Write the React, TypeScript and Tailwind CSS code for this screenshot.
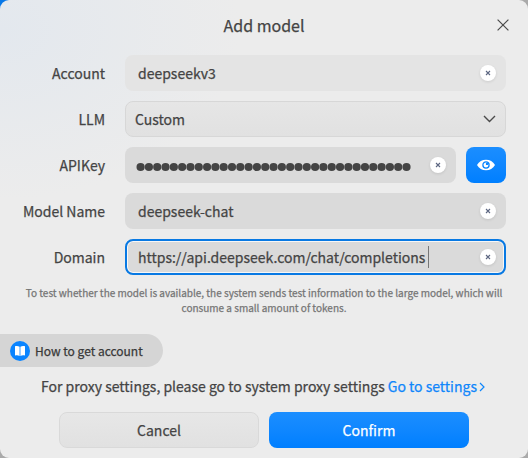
import type { ReactNode } from "react";

function ClearButton() {
  return (
    <button
      aria-label="Clear"
      className="flex size-4 shrink-0 items-center justify-center rounded-full bg-white shadow-[0_1px_3px_rgba(0,0,0,0.1)]"
    >
      <svg width="6" height="6" viewBox="0 0 6 6" fill="none" stroke="#5d6782" strokeWidth="1.1">
        <path d="M1 1l4 4M5 1L1 5" />
      </svg>
    </button>
  );
}

function Row({ label, children }: { label: string; children: ReactNode }) {
  return (
    <div className="flex h-9 items-center">
      <div className="w-[105px] shrink-0 text-right">{label}</div>
      <div className="ml-5 flex h-9 w-[381px] gap-2.5">{children}</div>
    </div>
  );
}

export default function App() {
  return (
    <div className="h-[458px] w-[528px] overflow-hidden bg-[linear-gradient(135deg,#0878e8_0,#0878e8_20px,#aaa_30px,#aaa_100%)]">
      <div className="flex h-full w-full flex-col overflow-hidden rounded-[9px] bg-[#ececec] bg-[radial-gradient(ellipse_240px_170px_at_0px_30px,#e3e8ee,#ececec)] font-['Noto_Sans_CJK_SC',sans-serif] text-[14px] leading-5 font-normal whitespace-nowrap text-[#444] [-webkit-text-stroke:0.25px_currentColor]">
        <header className="flex h-[55px] shrink-0 items-start">
          <h1 className="ml-[64px] flex-1 pt-[15px] text-center text-[16px] leading-5">Add model</h1>
          <button aria-label="Close" className="mt-[19px] mr-[19px] ml-[33px] size-3">
            <svg width="12" height="12" viewBox="0 0 12 12" fill="none" stroke="#4a4a4a" strokeWidth="1.2">
              <path d="M.6.6l10.8 10.8M11.4.6L.6 11.4" />
            </svg>
          </button>
        </header>
        <div className="flex flex-col gap-2.5">
          <Row label="Account">
            <div className="flex flex-1 items-center justify-between rounded-lg bg-[#e4e4e4] pr-[10px] pl-[13px]">
              <span>deepseekv3</span>
              <ClearButton />
            </div>
          </Row>
          <Row label="LLM">
            <div className="flex flex-1 items-center justify-between rounded-lg border border-[#d7d7d7] bg-linear-to-b from-[#e6e6e6] to-[#e1e1e1] pr-[9px] pl-[9px]">
              <span>Custom</span>
              <svg width="13" height="8" viewBox="0 0 13 8" fill="none" stroke="#4a4a4a" strokeWidth="1.4">
                <path d="M1 1l5.5 5.5L12 1" />
              </svg>
            </div>
          </Row>
          <Row label="APIKey">
            <div className="flex flex-1 items-center justify-between rounded-lg bg-[#dadada] pr-[10px] pl-[11px]">
              <svg width="276" height="10" viewBox="0 0 276 10" className="mt-1" fill="#444">
                {Array.from({ length: 33 }, (_, i) => (
                  <circle key={i} cx={4.6 + i * 8.31} cy="5" r="4.1" />
                ))}
              </svg>
              <ClearButton />
            </div>
            <button
              aria-label="Show key"
              className="flex w-10 items-center justify-center rounded-lg bg-linear-to-b from-[#1b8eff] to-[#007fff]"
            >
              <svg width="18" height="12" viewBox="0 0 18 12">
                <path d="M0 6C2 2.500 5.200.8 9 .8S16 2.500 18 6c-2 3.500-5.200 5.200-9 5.200S2 9.500 0 6z" fill="#fff" />
                <circle cx="9" cy="6" r="3.100" fill="none" stroke="#0a86ff" strokeWidth="1.300" />
                <circle cx="10" cy="4.900" r="1.200" fill="#0a86ff" />
              </svg>
            </button>
          </Row>
          <Row label="Model Name">
            <div className="flex flex-1 items-center justify-between rounded-lg bg-[#dadada] pr-[10px] pl-[13px]">
              <span>deepseek-chat</span>
              <ClearButton />
            </div>
          </Row>
          <Row label="Domain">
            <div className="flex flex-1 items-center justify-between rounded-lg border-2 border-[#0879e3] bg-[#dadada] pr-[8px] pl-[11px] shadow-[inset_0_0_0_1px_#f7f7f7]">
              <span className="flex items-center">
                https://api.deepseek.com/chat/completions
                <span className="ml-[3px] h-[22px] w-px bg-[#777]" />
              </span>
              <ClearButton />
            </div>
          </Row>
        </div>
        <p className="mt-[10px] shrink-0 text-center text-[10px] leading-[15px] text-[#757575]">
          To test whether the model is available, the system sends test information to the large model, which will
          <br />
          consume a small amount of tokens.
        </p>
        <button className="mt-[19px] flex h-[33px] w-[163px] shrink-0 items-center rounded-r-full bg-[#d5d5d5] pl-2.5 text-[12px] text-[#393939]">
          <svg width="20" height="20" viewBox="0 0 20 20" className="mr-[5px]">
            <circle cx="10" cy="10" r="10" fill="#0a84ff" />
            <path d="M5 5.200c1.800-.5 3.300-.3 4.600.5v9.200c-1.300-.7-2.800-.8-4.600-.4zM15 5.200c-1.800-.5-3.300-.3-4.600.5v9.200c1.300-.7 2.800-.8 4.600-.4z" fill="#fff" />
          </svg>
          How to get account
        </button>
        <div className="mt-[9px] flex h-5 shrink-0 items-center pl-[41px]">
          <span>For proxy settings, please go to system proxy settings</span>
          <a className="ml-[3px] flex items-center text-[#0f86fb]">
            Go to settings
            <svg width="6" height="10" viewBox="0 0 6 10" className="mt-px ml-[2px]" fill="none" stroke="#0f86fb" strokeWidth="1.200">
              <path d="M1 1l4 4-4 4" />
            </svg>
          </a>
        </div>
        <div className="mt-[16px] flex shrink-0 gap-2.5 pl-[59px]">
          <button className="h-9 w-[200px] rounded-lg border border-[#d9d9d9] bg-linear-to-b from-[#e7e7e7] to-[#e1e1e1]">
            Cancel
          </button>
          <button className="h-9 w-[200px] rounded-lg bg-linear-to-b from-[#1b8eff] to-[#007fff] text-white">
            Confirm
          </button>
        </div>
      </div>
    </div>
  );
}
